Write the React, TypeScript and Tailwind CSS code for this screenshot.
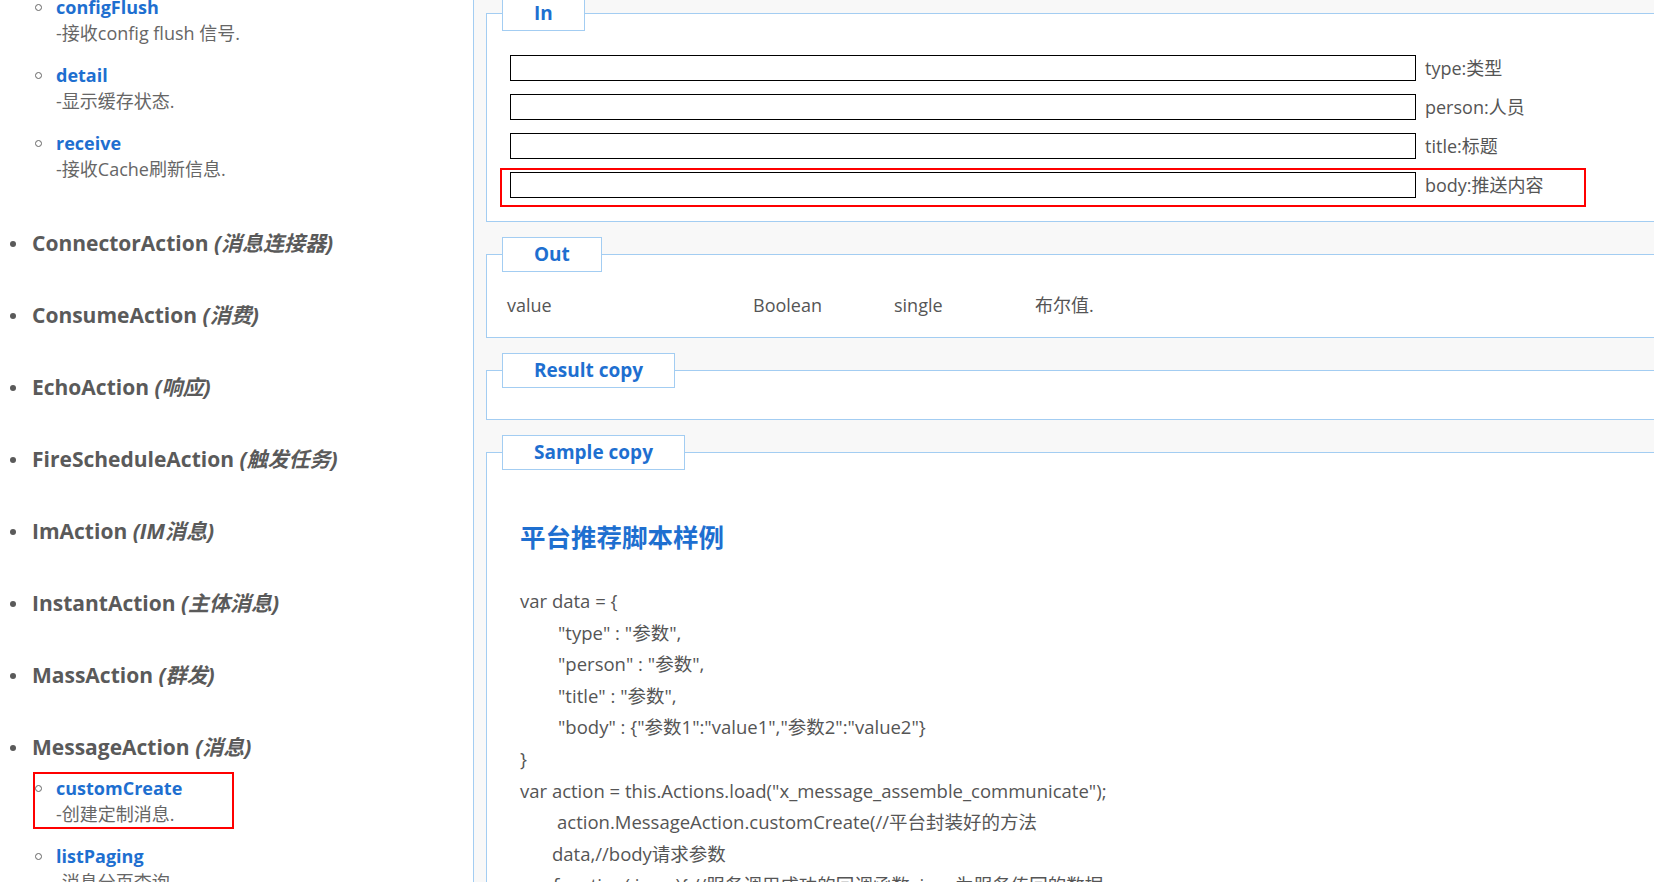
const font = { fontFamily: '"Open Sans", "Noto Sans CJK SC", sans-serif' };

const subTop = [
  { name: "configFlush", desc: "-接收config flush 信号." },
  { name: "detail", desc: "-显示缓存状态." },
  { name: "receive", desc: "-接收Cache刷新信息." },
];

const actions = [
  { name: "ConnectorAction", cn: "(消息连接器)" },
  { name: "ConsumeAction", cn: "(消费)" },
  { name: "EchoAction", cn: "(响应)" },
  { name: "FireScheduleAction", cn: "(触发任务)" },
  { name: "ImAction", cn: "(IM消息)" },
  { name: "InstantAction", cn: "(主体消息)" },
  { name: "MassAction", cn: "(群发)" },
  { name: "MessageAction", cn: "(消息)" },
];

const subBottom = [
  { name: "customCreate", desc: "-创建定制消息.", marked: true },
  { name: "listPaging", desc: "-消息分页查询." },
];

const inputs = [
  { label: "type:类型" },
  { label: "person:人员" },
  { label: "title:标题" },
  { label: "body:推送内容", marked: true },
];

const code = [
  { text: "var data = {", pl: "pl-0" },
  { text: '"type" : "参数",', pl: "pl-[38px]" },
  { text: '"person" : "参数",', pl: "pl-[38px]" },
  { text: '"title" : "参数",', pl: "pl-[38px]" },
  { text: '"body" : {"参数1":"value1","参数2":"value2"}', pl: "pl-[38px]" },
  { text: "}", pl: "pl-0" },
  { text: 'var action = this.Actions.load("x_message_assemble_communicate");', pl: "pl-0" },
  { text: "action.MessageAction.customCreate(//平台封装好的方法", pl: "pl-[37px]" },
  { text: "data,//body请求参数", pl: "pl-[32px]" },
  { text: "function( json ){ //服务调用成功的回调函数, json为服务传回的数据", pl: "pl-[33px]" },
];

function SubItem({ name, desc, marked }: { name: string; desc: string; marked?: boolean }) {
  return (
    <div className="relative mb-[16px]">
      {marked && (
        <div className="absolute left-[33px] top-[-3px] h-[57px] w-[201px] border-2 border-[#ff0000]" />
      )}
      <div className="flex h-[26px] items-center pl-[35px]">
        <span className="h-[7px] w-[7px] rounded-full border border-[#666]" />
        <span className="ml-[14px] text-[18px] font-bold text-[#1e6fd0]">{name}</span>
      </div>
      <div className="h-[26px] whitespace-nowrap pl-[56px] text-[18px] leading-[26px] text-[#666]">{desc}</div>
    </div>
  );
}

function Legend({ children }: { children: string }) {
  return (
    <legend className="ml-[15px] h-[35px] border border-[#a3cdf2] bg-white px-[31px] text-[19px] font-bold leading-[33px] text-[#1e6fd0]">
      {children}
    </legend>
  );
}

export default function App() {
  return (
    <div className="flex h-[882px] w-[1654px] overflow-hidden bg-white" style={font}>
      {/* left nav */}
      <div className="flex w-[473px] shrink-0 flex-col">
        <div className="mt-[-6px] flex flex-col">
          {subTop.map((s) => (
            <SubItem key={s.name} {...s} />
          ))}
        </div>
        <div className="mt-[31px] flex flex-col">
          {actions.map((a) => (
            <div key={a.name} className="mb-[42px] flex h-[30px] items-center pl-[10px] last:mb-[12px]">
              <span className="h-[6px] w-[6px] rounded-full bg-[#5a5a5a]" />
              <span className="ml-[16px] whitespace-nowrap text-[21px] font-bold text-[#5a5a5a]">
                {a.name} <i className="font-bold">{a.cn}</i>
              </span>
            </div>
          ))}
        </div>
        <div className="flex flex-col">
          {subBottom.map((s) => (
            <SubItem key={s.name} {...s} />
          ))}
        </div>
      </div>

      {/* right detail */}
      <div className="flex-1 overflow-hidden border-l border-[#a3cdf2] bg-[#f8f8f8] pl-[12px]">
        <div className="mt-[-4px]">
          <fieldset className="border border-r-0 border-[#a3cdf2] bg-white">
            <Legend>In</Legend>
            <div className="flex flex-col gap-[13px] pb-[23px] pl-[23px] pt-[24px]">
              {inputs.map((r) => (
                <div key={r.label} className="relative flex h-[26px] items-center">
                  {r.marked && (
                    <div className="absolute left-[-10px] top-[-4px] h-[39px] w-[1086px] border-2 border-[#ff0000]" />
                  )}
                  <div className="h-[26px] w-[906px] border border-black bg-white" />
                  <span className="ml-[9px] text-[18px] text-[#555]">{r.label}</span>
                </div>
              ))}
            </div>
          </fieldset>

          <fieldset className="mt-[15px] border border-r-0 border-[#a3cdf2] bg-white">
            <Legend>Out</Legend>
            <div className="mb-[17px] mt-[18px] flex h-[30px] items-center pl-[20px] text-[18px] text-[#555]">
              <span className="w-[246px]">value</span>
              <span className="w-[141px]">Boolean</span>
              <span className="w-[141px]">single</span>
              <span>布尔值.</span>
            </div>
          </fieldset>

          <fieldset className="mt-[15px] border border-r-0 border-[#a3cdf2] bg-white">
            <Legend>Result copy</Legend>
            <div className="h-[31px]" />
          </fieldset>

          <fieldset className="mt-[15px] border border-r-0 border-[#a3cdf2] bg-white">
            <Legend>Sample copy</Legend>
            <div className="pl-[33px] pt-[49px]">
              <h2 className="text-[25.5px] font-bold leading-[36px] text-[#1e6fd0]">平台推荐脚本样例</h2>
              <div className="mt-[30px] text-[18.5px] leading-[31.6px] text-[#555]">
                {code.map((c, i) => (
                  <div key={i} className={`${c.pl} whitespace-pre`}>
                    {c.text}
                  </div>
                ))}
              </div>
            </div>
          </fieldset>
        </div>
      </div>
    </div>
  );
}
